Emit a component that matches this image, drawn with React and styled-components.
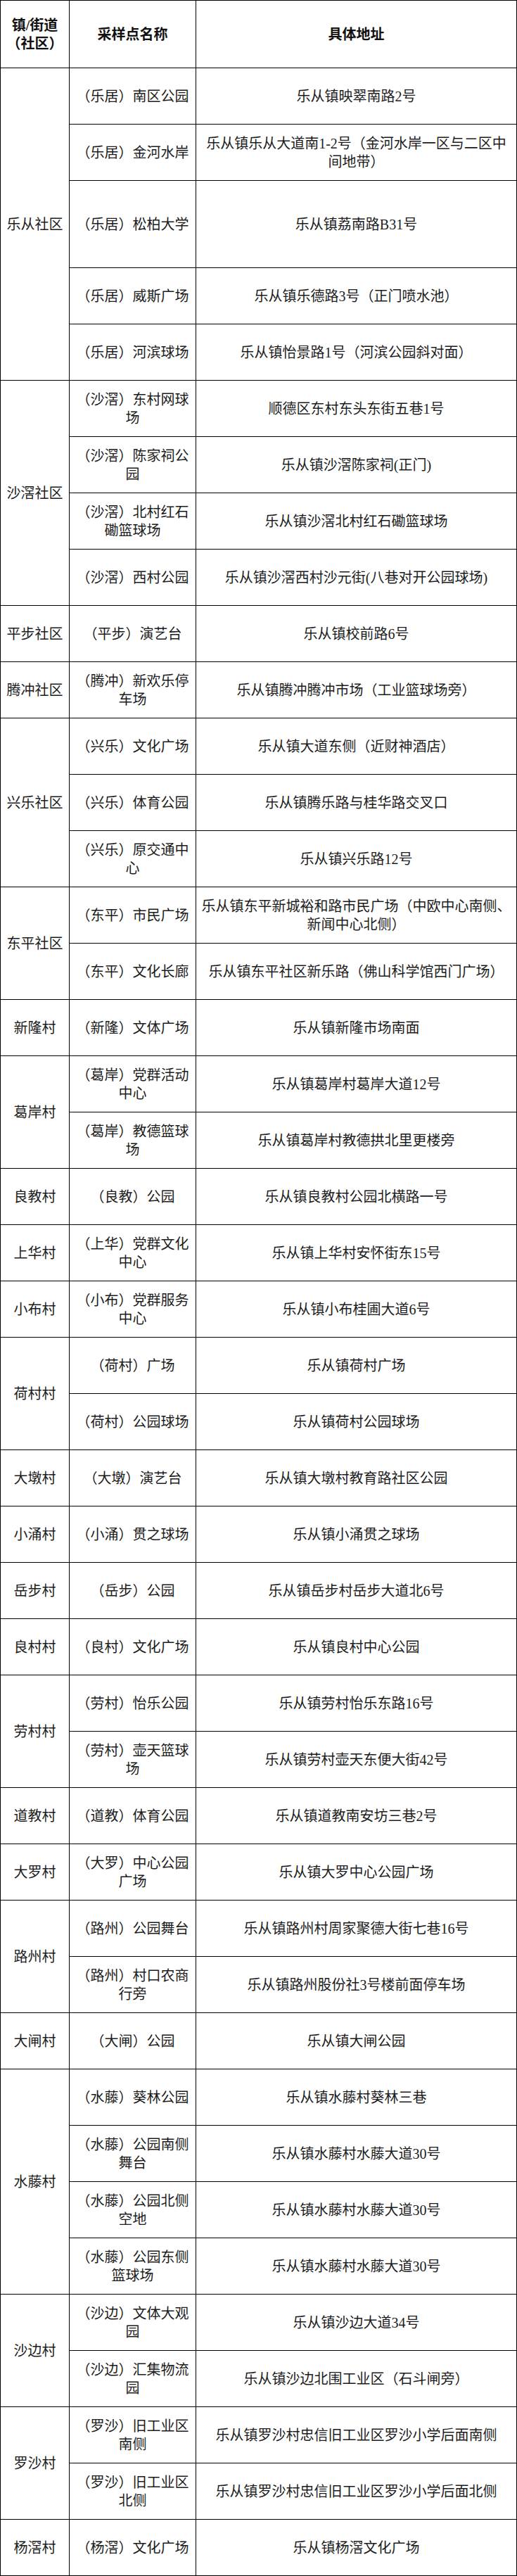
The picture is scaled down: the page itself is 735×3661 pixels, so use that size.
import React from 'react';
import styled, { createGlobalStyle } from 'styled-components';

const GlobalStyle = createGlobalStyle`
  html, body { margin: 0; padding: 0; background: #ffffff; }
  body {
    font-family: "Liberation Serif", "Noto Sans CJK SC", serif;
    color: #1c1c1c;
  }
`;

const Sheet = styled.div`
  display: grid;
  width: 735px;
  box-sizing: border-box;
  grid-template-columns: 98px 180px 456px;
  grid-template-rows: ${(p) => p.$rows};
  border-top: 1px solid #000;
  border-left: 1px solid #000;
`;

const Cell = styled.div`
  box-sizing: border-box;
  display: flex;
  align-items: center;
  justify-content: center;
  text-align: center;
  border-right: 1px solid #000;
  border-bottom: 1px solid #000;
  padding: 0 ${(p) => p.$pad || 8}px;
  font-size: 20px;
  line-height: 26px;
  font-weight: 400;
  grid-column: ${(p) => p.$col};
  grid-row: ${(p) => p.$row} / span ${(p) => p.$span || 1};
  word-break: normal;
`;

const HeadCell = styled(Cell)`
  font-family: "Liberation Serif", "Noto Sans CJK SC", serif;
  font-weight: 700;
  color: #111;
`;

const groups = [
  { name: '乐从社区', items: [
    ['（乐居）南区公园', '乐从镇映翠南路2号'],
    ['（乐居）金河水岸', '乐从镇乐从大道南1-2号（金河水岸一区与二区中间地带）'],
    ['（乐居）松柏大学', '乐从镇荔南路B31号', true],
    ['（乐居）威斯广场', '乐从镇乐德路3号（正门喷水池）'],
    ['（乐居）河滨球场', '乐从镇怡景路1号（河滨公园斜对面）'],
  ] },
  { name: '沙滘社区', items: [
    ['（沙滘）东村网球场', '顺德区东村东头东街五巷1号'],
    ['（沙滘）陈家祠公园', '乐从镇沙滘陈家祠(正门)'],
    ['（沙滘）北村红石磡篮球场', '乐从镇沙滘北村红石磡篮球场'],
    ['（沙滘）西村公园', '乐从镇沙滘西村沙元街(八巷对开公园球场)'],
  ] },
  { name: '平步社区', items: [['（平步）演艺台', '乐从镇校前路6号']] },
  { name: '腾冲社区', items: [['（腾冲）新欢乐停车场', '乐从镇腾冲腾冲市场（工业篮球场旁）']] },
  { name: '兴乐社区', items: [
    ['（兴乐）文化广场', '乐从镇大道东侧（近财神酒店）'],
    ['（兴乐）体育公园', '乐从镇腾乐路与桂华路交叉口'],
    ['（兴乐）原交通中心', '乐从镇兴乐路12号'],
  ] },
  { name: '东平社区', items: [
    ['（东平）市民广场', '乐从镇东平新城裕和路市民广场（中欧中心南侧、新闻中心北侧）'],
    ['（东平）文化长廊', '乐从镇东平社区新乐路（佛山科学馆西门广场）'],
  ] },
  { name: '新隆村', items: [['（新隆）文体广场', '乐从镇新隆市场南面']] },
  { name: '葛岸村', items: [
    ['（葛岸）党群活动中心', '乐从镇葛岸村葛岸大道12号'],
    ['（葛岸）教德篮球场', '乐从镇葛岸村教德拱北里更楼旁'],
  ] },
  { name: '良教村', items: [['（良教）公园', '乐从镇良教村公园北横路一号']] },
  { name: '上华村', items: [['（上华）党群文化中心', '乐从镇上华村安怀街东15号']] },
  { name: '小布村', items: [['（小布）党群服务中心', '乐从镇小布桂圃大道6号']] },
  { name: '荷村村', items: [
    ['（荷村）广场', '乐从镇荷村广场'],
    ['（荷村）公园球场', '乐从镇荷村公园球场'],
  ] },
  { name: '大墩村', items: [['（大墩）演艺台', '乐从镇大墩村教育路社区公园']] },
  { name: '小涌村', items: [['（小涌）贯之球场', '乐从镇小涌贯之球场']] },
  { name: '岳步村', items: [['（岳步）公园', '乐从镇岳步村岳步大道北6号']] },
  { name: '良村村', items: [['（良村）文化广场', '乐从镇良村中心公园']] },
  { name: '劳村村', items: [
    ['（劳村）怡乐公园', '乐从镇劳村怡乐东路16号'],
    ['（劳村）壶天篮球场', '乐从镇劳村壶天东便大街42号'],
  ] },
  { name: '道教村', items: [['（道教）体育公园', '乐从镇道教南安坊三巷2号']] },
  { name: '大罗村', items: [['（大罗）中心公园广场', '乐从镇大罗中心公园广场']] },
  { name: '路州村', items: [
    ['（路州）公园舞台', '乐从镇路州村周家聚德大街七巷16号'],
    ['（路州）村口农商行旁', '乐从镇路州股份社3号楼前面停车场'],
  ] },
  { name: '大闸村', items: [['（大闸）公园', '乐从镇大闸公园']] },
  { name: '水藤村', items: [
    ['（水藤）葵林公园', '乐从镇水藤村葵林三巷'],
    ['（水藤）公园南侧舞台', '乐从镇水藤村水藤大道30号'],
    ['（水藤）公园北侧空地', '乐从镇水藤村水藤大道30号'],
    ['（水藤）公园东侧篮球场', '乐从镇水藤村水藤大道30号'],
  ] },
  { name: '沙边村', items: [
    ['（沙边）文体大观园', '乐从镇沙边大道34号'],
    ['（沙边）汇集物流园', '乐从镇沙边北围工业区（石斗闸旁）'],
  ] },
  { name: '罗沙村', items: [
    ['（罗沙）旧工业区南侧', '乐从镇罗沙村忠信旧工业区罗沙小学后面南侧'],
    ['（罗沙）旧工业区北侧', '乐从镇罗沙村忠信旧工业区罗沙小学后面北侧'],
  ] },
  { name: '杨滘村', items: [['（杨滘）文化广场', '乐从镇杨滘文化广场']] },
];

export default function App() {
  const tracks = ['96px'];
  const cells = [];
  let row = 2;
  groups.forEach((g, gi) => {
    cells.push(
      <Cell key={`g${gi}`} $col={1} $row={row} $span={g.items.length}>
        {g.name}
      </Cell>
    );
    g.items.forEach(([site, addr, tall], ii) => {
      tracks.push(tall ? '124px' : '80px');
      cells.push(
        <Cell key={`s${gi}-${ii}`} $col={2} $row={row}>
          {site}
        </Cell>
      );
      cells.push(
        <Cell key={`a${gi}-${ii}`} $col={3} $row={row} $pad={5}>
          {addr}
        </Cell>
      );
      row += 1;
    });
  });

  return (
    <>
      <GlobalStyle />
      <Sheet $rows={tracks.join(' ')}>
        <HeadCell $col={1} $row={1}>
          镇/街道<br />（社区）
        </HeadCell>
        <HeadCell $col={2} $row={1}>采样点名称</HeadCell>
        <HeadCell $col={3} $row={1} $pad={5}>具体地址</HeadCell>
        {cells}
      </Sheet>
    </>
  );
}
